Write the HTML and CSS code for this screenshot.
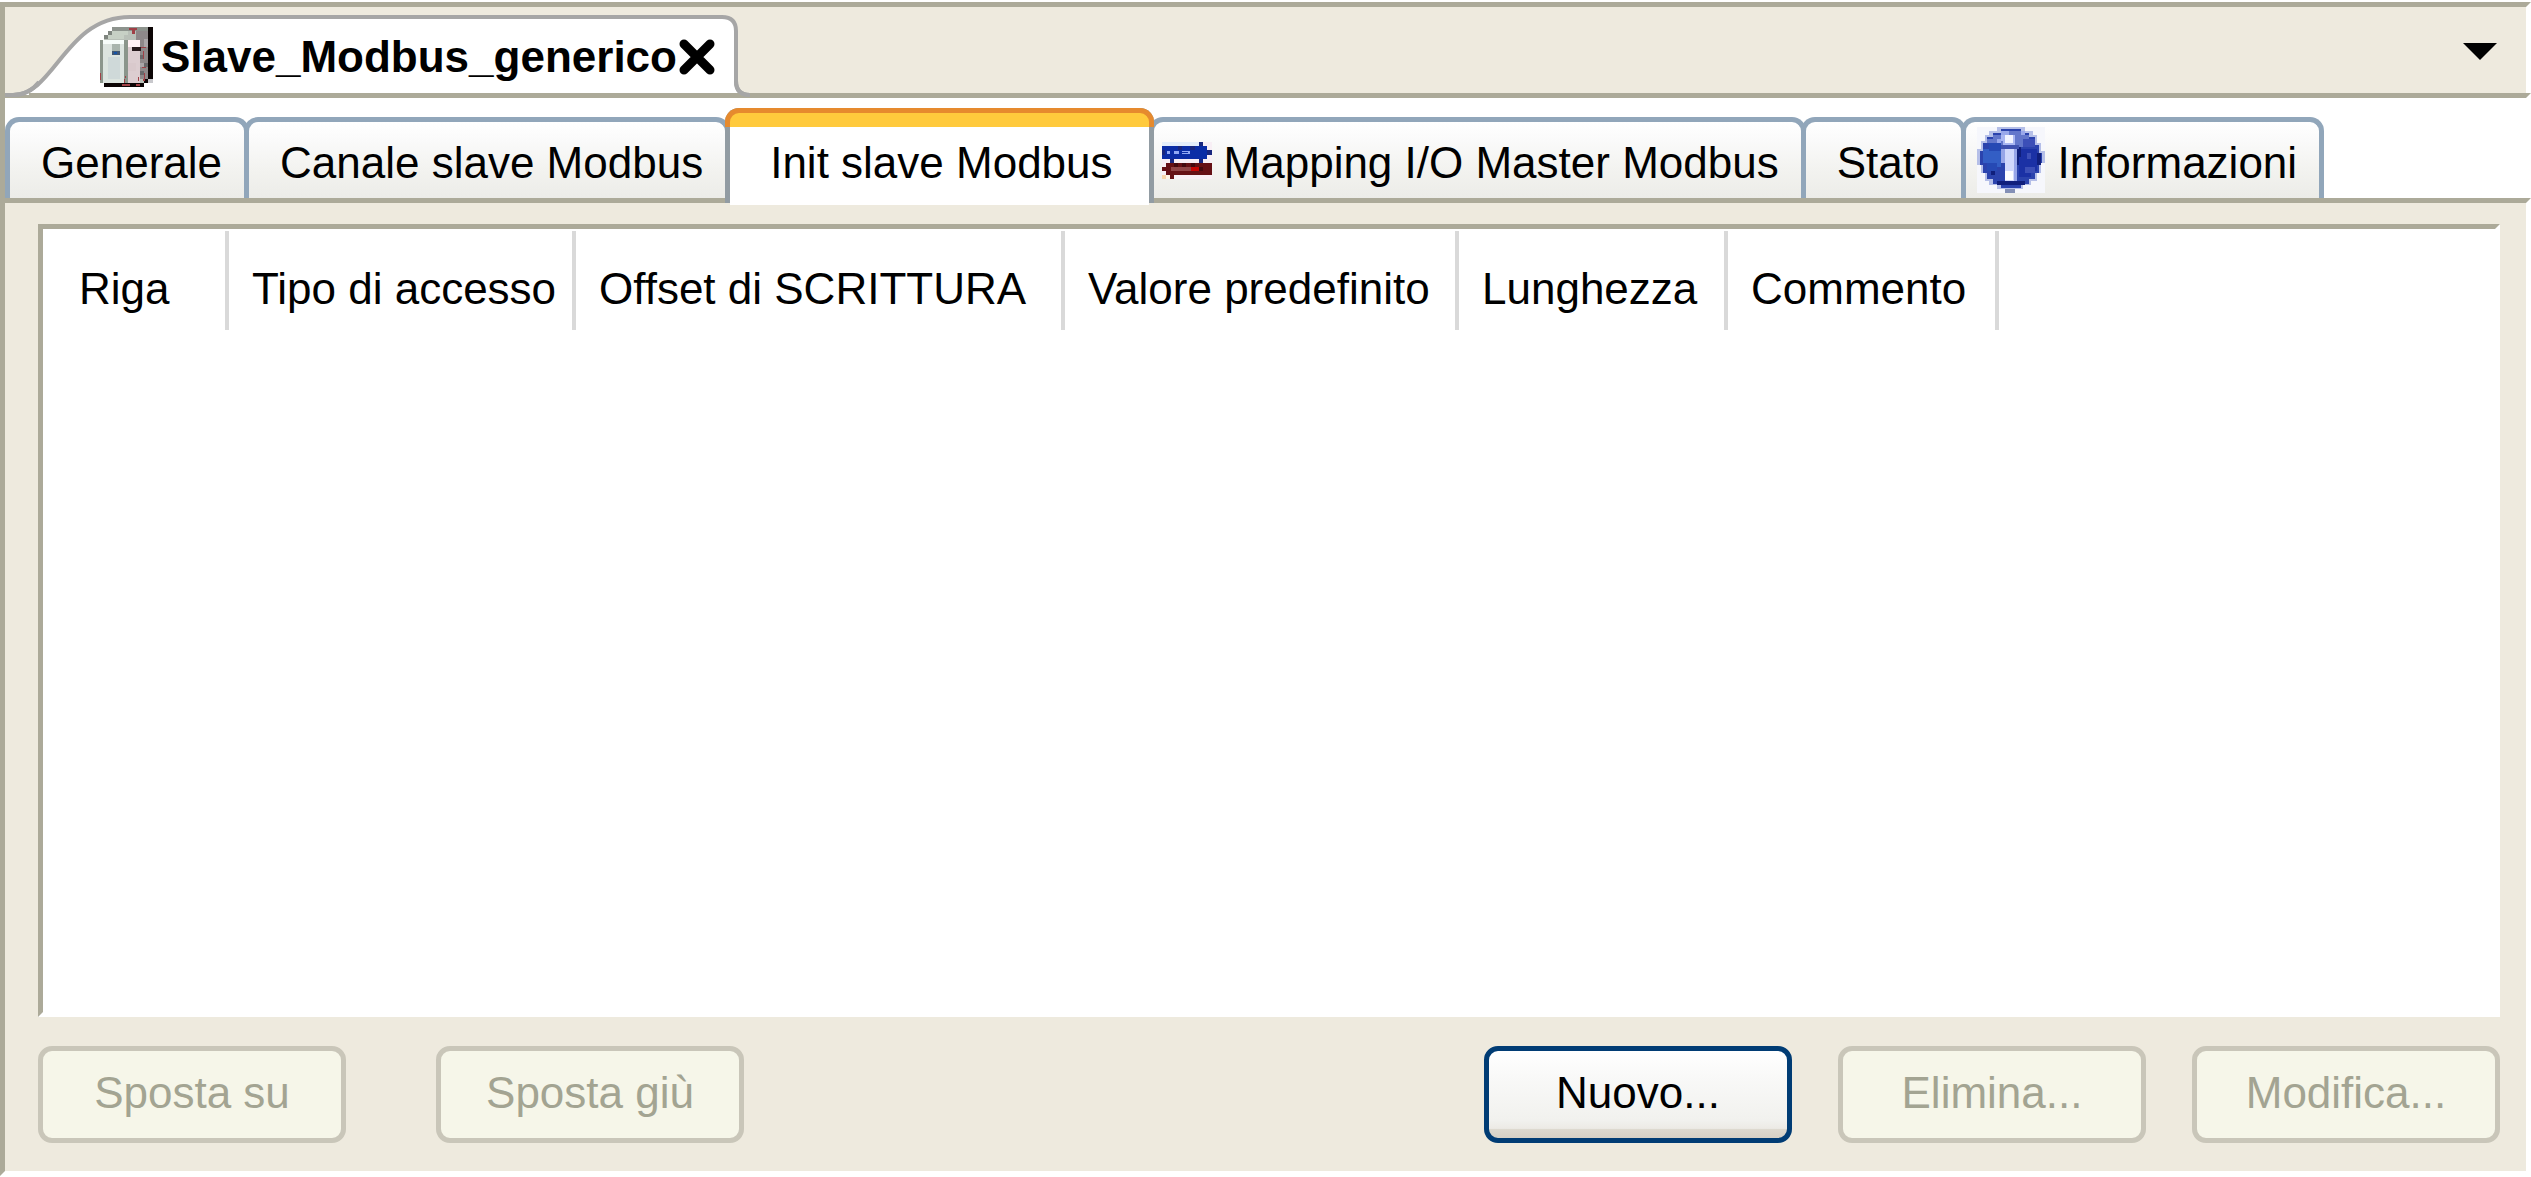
FILE: index.html
```html
<!DOCTYPE html>
<html lang="it">
<head>
    <meta charset="UTF-8">
    <meta name="viewport" content="width=device-width, initial-scale=1.0">
    <title>Slave_Modbus_generico</title>
    <link rel="stylesheet" href="styles.css">
</head>
<body>
    <header class="doc-bar bevel">
        <div class="doc-tab">
            <svg class="doc-tab-shape" width="746" height="84" viewBox="0 0 746 84" aria-hidden="true">
                <path d="M0 80H8C50 80 60 2 125 2H717Q731 2 731 16V66Q731 80 745 80" fill="#fff" stroke="#a6a6a6" stroke-width="4"/>
                <path d="M24 78H735V83H24z" fill="#acaa99"/>
                <path d="M0 80H8C20 80 28 75 34 67M731 66Q731 80 745 80" fill="none" stroke="#a6a6a6" stroke-width="4"/>
            </svg>
            <svg class="device-icon" width="53" height="60" viewBox="0 0 53 60" shape-rendering="crispEdges" aria-hidden="true">
                <path d="M12 0H53V52H48V56H44V60H4V56H0V13H4V8H8V4H12z" fill="#b9c0b8"/>
                <path d="M12 0H48V4H12z" fill="#8d938d"/>
                <path d="M8 4H28V8H8zM4 8H24V12H4z" fill="#c7d0c5"/>
                <path d="M4 8H8V12H4zM8 4H12V8H8z" fill="#7f857f"/>
                <path d="M36 4H48V52H40V13H36z" fill="#8e8889"/>
                <path d="M48 0H53V52H48zM4 56H44V60H4zM44 52H48V56H44z" fill="#0c0505"/>
                <path d="M48 52H53V56H48z" fill="#c8c8cc"/>
                <path d="M0 13H3V56H0z" fill="#8c968c"/>
                <path d="M3 13H24V56H3z" fill="#dce4df"/>
                <path d="M3 13H24V17H3z" fill="#f7fdfa"/>
                <path d="M8 30H20V52H8z" fill="#cfd9d9"/>
                <path d="M12 17H20V28H12z" fill="#a9b5ad"/>
                <path d="M12 24H20V28H12z" fill="#405774"/>
                <path d="M14 25H17V27H14z" fill="#1454a8"/>
                <path d="M24 13H28V56H24z" fill="#8b968b"/>
                <path d="M28 13H40V56H28z" fill="#dccdd0"/>
                <path d="M28 13H40V20H28z" fill="#fff1f4"/>
                <path d="M32 20H41V24H32z" fill="#26191b"/>
                <path d="M28 36H36V44H28z" fill="#d9c9cc"/>
                <path d="M40 28H44V32H40zM44 36H48V40H44zM40 44H44V48H40z" fill="#69696b"/>
                <path d="M44 12H48V20H44zM40 36H44V40H40z" fill="#aaa6a8"/>
                <path d="M29 1H37V3H35V7H32V3H29zM41 20H46V21H41zM43 24H44V32H43zM42 40H46V41H42zM44 46H45V54H43V52H44zM25 49H26V51H25zM24 52H25V56H24zM0 46H1V53H0zM38 50H39V54H38zM22 57H30V59H22zM36 57H40V59H36z" fill="#a04046"/>
            </svg>
            <span class="doc-title">Slave_Modbus_generico</span>
            <button class="close-button" type="button" aria-label="Chiudi">
                <svg width="36" height="36" viewBox="0 0 36 36" aria-hidden="true">
                    <path d="M5 5L31 31M31 5L5 31" stroke="#000" stroke-width="9" stroke-linecap="round"/>
                </svg>
            </button>
        </div>
        <button class="menu-button" type="button" aria-label="Elenco documenti">
            <svg width="34" height="17" viewBox="0 0 34 17" aria-hidden="true">
                <path d="M0 0H34L17 17z" fill="#000"/>
            </svg>
        </button>
    </header>

    <nav class="tabs bevel" role="tablist" aria-label="Configurazione">
        <button class="tab" type="button" role="tab">Generale</button>
        <button class="tab" type="button" role="tab">Canale slave Modbus</button>
        <button class="tab active" type="button" role="tab" aria-selected="true">Init slave Modbus</button>
        <button class="tab with-icon" type="button" role="tab">
            <svg width="50" height="37" viewBox="0 0 50 37" shape-rendering="crispEdges" aria-hidden="true">
                <path d="M0 0H50V37H0z" fill="#f8eff5"/>
                <path d="M0 0H37V4H0z" fill="#e4eefb"/>
                <path d="M0 4H37V0H41V4H45V8H50V13H45V17H41V21H37V17H12V21H8V17H0z" fill="#0b2da6"/>
                <path d="M16 4H20V8H16zM28 4H33V8H28zM8 17H12V21H8zM37 0H41V4H37zM37 17H41V21H37zM45 8H50V13H45zM0 8H3V13H0z" fill="#19277f"/>
                <path d="M5 9H8V12H5zM12 9H17V12H12zM20 9H28V12H20z" fill="#91a9f5"/>
                <path d="M20 10H26V11H20z" fill="#0b2da6"/>
                <path d="M4 21H50V33H12V37H8V33H4V29H0V25H4z" fill="#651015"/>
                <path d="M9 25H37V29H9z" fill="#904447"/>
                <path d="M12 21H16V25H12zM20 21H24V25H20zM29 21H33V25H29zM37 25H41V29H37z" fill="#43090f"/>
                <path d="M29 25H37V29H29z" fill="#c60505"/>
                <path d="M0 33H4V37H0z" fill="#f8d6ab"/>
                <path d="M4 33H8V37H4z" fill="#fff5e7"/>
            </svg>
            Mapping I/O Master Modbus
        </button>
        <button class="tab" type="button" role="tab">Stato</button>
        <button class="tab with-icon large" type="button" role="tab">
            <svg width="68" height="66" viewBox="0 0 68 66" shape-rendering="crispEdges" aria-hidden="true">
                <path d="M0 0H68V66H0z" fill="#f6f7fc"/>
                <path d="M20 0H48V4H56V8H60V16H64V24H68V36H64V46H60V54H54V58H46V62H38V66H28V62H20V58H12V54H8V46H4V38H0V22H4V14H8V8H12V4H20z" fill="#b5bfe8"/>
                <path d="M24 2H44V6H52V10H58V18H62V26H65V36H62V46H58V52H52V57H44V61H24V57H16V52H10V46H6V38H3V24H6V16H10V10H16V6H24z" fill="#2b43ad"/>
                <path d="M16 8H24V4H44V8H52V14H46V20H18V16H10V12H16z" fill="#6377cb"/>
                <path d="M6 22H24V40H10V36H6z" fill="#335ec5"/>
                <path d="M12 16H24V24H12zM10 36H20V44H10z" fill="#2649b4"/>
                <path d="M42 22H60V44H54V50H42z" fill="#1b31a5"/>
                <path d="M46 12H58V20H46zM48 40H58V46H48zM50 26H54V32H50z" fill="#3c4fb7"/>
                <path d="M24 4H32V8H24zM20 12H24V16H20zM44 4H48V8H44z" fill="#99a8eb"/>
                <path d="M38 20H44V30H42V38H38zM60 26H64V38H60zM14 44H18V48H14zM20 54H48V58H20z" fill="#101f7c"/>
                <path d="M24 18H42V22H24z" fill="#4052b0"/>
                <path d="M24 8H38V18H26V14H24z" fill="#aab7f2"/>
                <path d="M28 8H36V16H28z" fill="#f1f3ff"/>
                <path d="M24 22H40V54H28V36H24z" fill="#97a5e8"/>
                <path d="M28 22H37V54H28z" fill="#d1d8fc"/>
                <path d="M28 44H36V53H28z" fill="#fbfbff"/>
                <path d="M28 62H38V66H28z" fill="#8490b6"/>
            </svg>
            Informazioni
        </button>
    </nav>

    <main class="content bevel">
        <div class="list">
            <table>
                <thead>
                    <tr>
                        <th class="col-row">Riga</th>
                        <th class="col-access">Tipo di accesso</th>
                        <th class="col-offset">Offset di SCRITTURA</th>
                        <th class="col-default">Valore predefinito</th>
                        <th class="col-length">Lunghezza</th>
                        <th class="col-comment">Commento</th>
                    </tr>
                </thead>
                <tbody></tbody>
            </table>
        </div>
        <div class="actions">
            <div class="move-actions">
                <button class="action" type="button" disabled>Sposta su</button>
                <button class="action" type="button" disabled>Sposta giù</button>
            </div>
            <div class="edit-actions">
                <button class="action primary" type="button">Nuovo...</button>
                <button class="action" type="button" disabled>Elimina...</button>
                <button class="action" type="button" disabled>Modifica...</button>
            </div>
        </div>
    </main>
</body>
</html>
```
FILE: styles.css
```css
* {
    margin: 0;
    padding: 0;
    box-sizing: border-box;
}
body {
    font-family: "Liberation Sans", Arial, sans-serif;
    font-size: 44px;
    line-height: 50px;
    color: #000;
    background: #fff;
    min-height: 100vh;
    padding: 2px 0 1px;
    display: flex;
    flex-direction: column;
}
button {
    font: inherit;
    color: inherit;
    border: none;
    background: none;
    white-space: nowrap;
}
svg {
    display: block;
    flex-shrink: 0;
}

/* sunken edge: grey on top and left, white on right and bottom */
.bevel {
    border: 5px solid;
    border-color: #acaa99 #fff #fff #acaa99;
    border-bottom-width: 0;
}

/* document bar */
.doc-bar {
    display: flex;
    justify-content: space-between;
    align-items: flex-start;
    height: 91px;
    padding-top: 8px;
    background: #eeeade;
}
.doc-tab {
    position: relative;
    z-index: 1;
    display: flex;
    align-items: center;
    height: 78px;
    padding-left: 95px;
    padding-top: 6px;
}
.doc-tab-shape {
    position: absolute;
    top: 0;
    left: 0;
}
.device-icon,
.doc-title,
.close-button {
    position: relative;
}
.doc-title {
    margin-left: 8px;
    font-weight: bold;
}
.close-button {
    margin-left: 2px;
}
.menu-button {
    padding: 28px 29px 0 0;
}

/* page tabs */
.tabs {
    display: flex;
    align-items: flex-end;
    height: 105px;
    background: #fff;
}
.tab {
    display: flex;
    align-items: center;
    height: 81px;
    margin-right: -5px;
    padding: 6px 22px 0 31px;
    border: 5px solid #91a6ba;
    border-bottom: none;
    border-radius: 14px 14px 0 0;
    background: linear-gradient(#fff, #fafafa 25%, #f3f3f0 60%, #ecece8);
}
.with-icon {
    gap: 12px;
    padding-left: 8px;
}
.with-icon.large {
    padding-left: 11px;
}
.with-icon svg {
    margin-top: -6px;
}
.tab.active {
    position: relative;
    z-index: 1;
    height: 95px;
    margin-bottom: -5px;
    padding: 10px 36px 0 40px;
    border-color: #929ca3;
    background: #fff;
}
.tab.active::before {
    content: '';
    position: absolute;
    top: -5px;
    left: -5px;
    right: -5px;
    height: 14px;
    border: 5px solid #e68a2e;
    border-bottom: none;
    border-radius: 14px 14px 0 0;
    background: #ffca3c;
}
.tab.active::after {
    content: '';
    position: absolute;
    left: 0;
    right: 0;
    bottom: -2px;
    height: 2px;
    background: #fff;
}

/* parameter list */
.content {
    flex: 1;
    display: flex;
    flex-direction: column;
    gap: 29px;
    padding: 21px 26px 28px 33px;
    border-bottom-width: 5px;
    background: #eeeade;
}
.list {
    flex: 1;
    padding-top: 2px;
    border: 5px solid;
    border-color: #acaa99 #fff #fff #acaa99;
    background: #fff;
}
table {
    border-collapse: separate;
    border-spacing: 0;
}
th {
    padding: 33px 0 16px 23px;
    border-right: 4px solid #d9d9d9;
    font-weight: normal;
    text-align: left;
    white-space: nowrap;
}
.col-row {
    min-width: 186px;
    padding-left: 36px;
}
.col-access {
    min-width: 347px;
}
.col-offset {
    min-width: 489px;
}
.col-default {
    min-width: 394px;
}
.col-length {
    min-width: 269px;
}
.col-comment {
    min-width: 271px;
}

/* buttons under the list */
.actions,
.move-actions,
.edit-actions {
    display: flex;
}
.actions {
    justify-content: space-between;
}
.move-actions {
    gap: 90px;
}
.edit-actions {
    gap: 46px;
}
.action {
    width: 308px;
    height: 97px;
    padding-bottom: 4px;
    border: 5px solid #c9c6b9;
    border-radius: 14px;
    background: #f6f6e9;
}
.action:disabled {
    color: #a3a492;
}
.primary {
    border-color: #003c74;
    background: linear-gradient(#fff, #f9f9f8 30%, #f1f1ee 80%, #eceae5 89%, #ddd9cf 90%, #d6d0c5);
}
```
